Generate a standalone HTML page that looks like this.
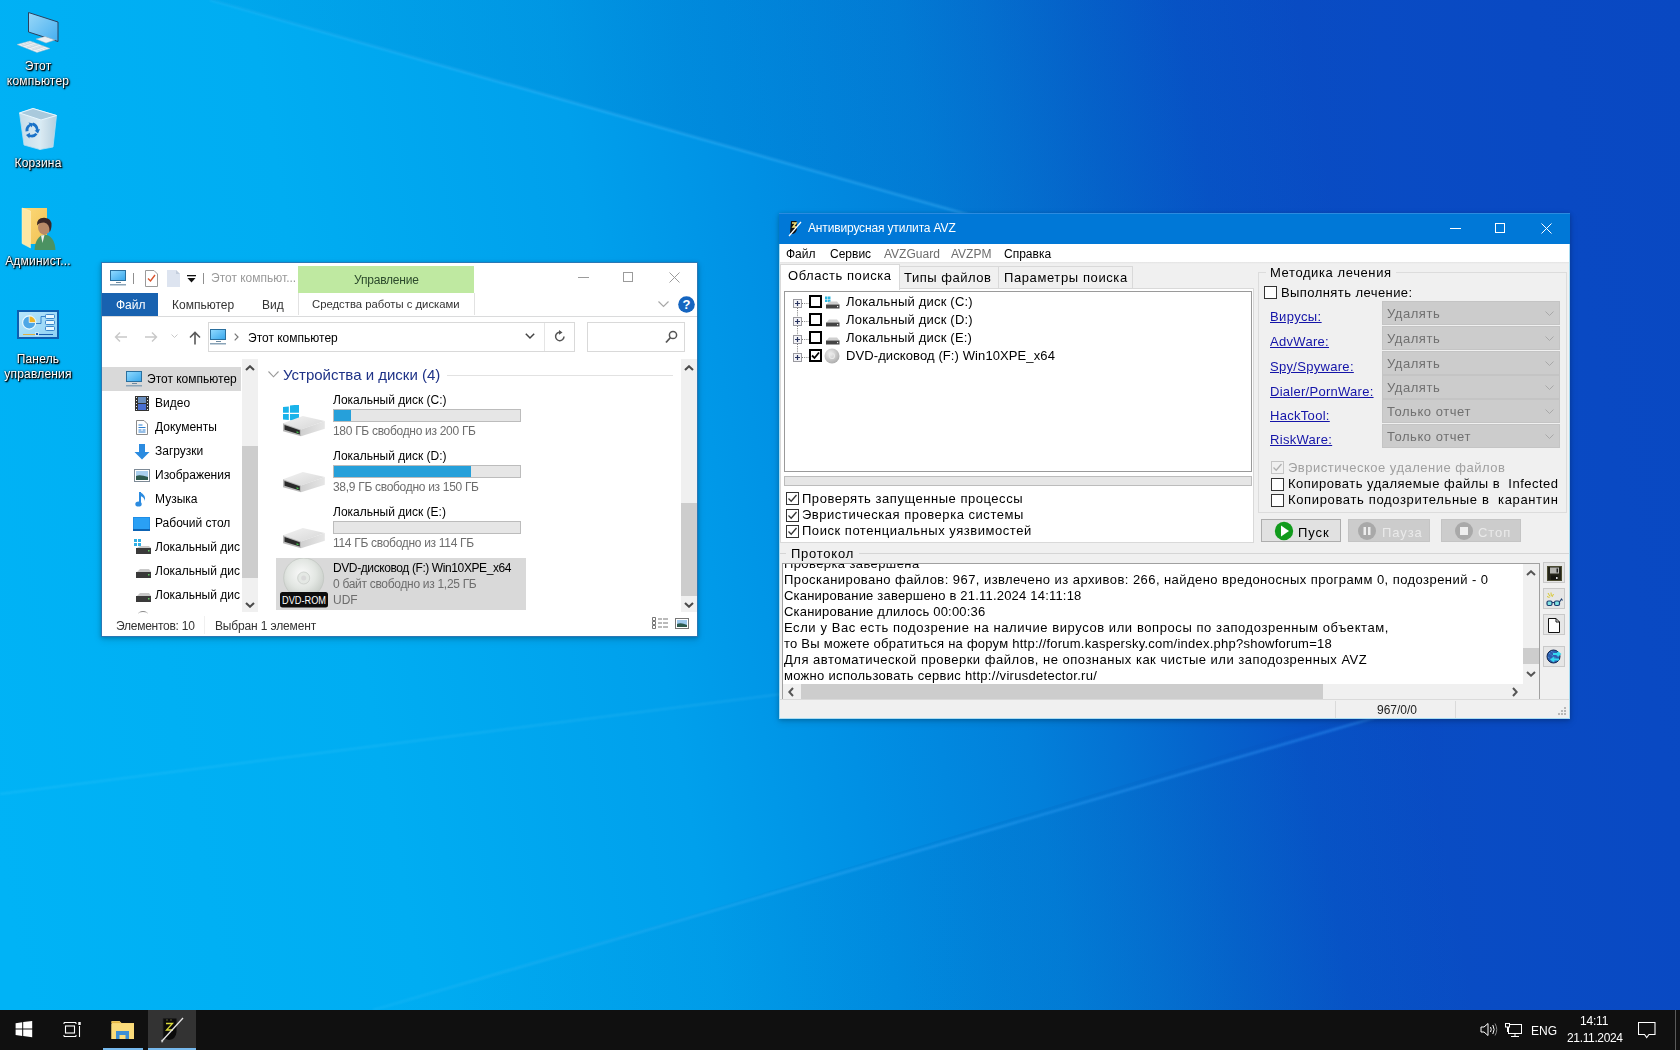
<!DOCTYPE html>
<html><head><meta charset="utf-8">
<style>
*{box-sizing:border-box;margin:0;padding:0}
html,body{width:1680px;height:1050px;overflow:hidden}
body{position:relative;font-family:"Liberation Sans",sans-serif;font-size:12px;color:#000;
background:linear-gradient(80deg,#00b3f6 0px,#00b3f6 31px,#00adf2 425px,#00a0ec 720px,#0090e4 893px,#0280da 1065px,#0473d3 1150px,#0564cc 1238px,#0754c7 1340px,#094cc4 1460px,#0949c3 1686px,#0948c2 1837px);}
.a{position:absolute}
#bgtop{left:0;top:0;width:1680px;height:1010px;background:linear-gradient(180deg,rgba(0,40,140,0.10) 0px,rgba(0,40,140,0) 350px)}
.ray{position:absolute;height:1px;background:rgba(120,220,255,0.45);transform-origin:0 0}
#taskbar{left:0;top:1010px;width:1680px;height:40px;background:#101010}
.dl{position:absolute;will-change:transform;color:#fff;font-size:12px;text-align:center;line-height:15px;letter-spacing:0.2px;text-shadow:1px 1px 1px #000,1px 1px 2px #000,0 0 2px rgba(0,0,0,.85)}

.win{position:absolute;background:#fff;box-shadow:0 1px 4px rgba(0,0,0,.22),0 3px 8px rgba(0,0,0,.12)}
.t{position:absolute;white-space:nowrap;line-height:1;will-change:transform}
#ex{left:101px;top:262px;width:597px;height:375px;border:1px solid #2b78b5}
#ex .t{font-size:12px}
.nav{position:absolute;left:53px;font-size:12px;color:#000}
.sb{position:absolute;background:#f0f0f0}
.th{position:absolute;background:#cdcdcd}
.bar{position:absolute;left:231px;width:188px;height:13px;border:1px solid #bcbcbc;background:#e6e6e6}
.bar i{position:absolute;left:0;top:0;height:11px;background:#26a0da}
.gr{color:#6d6d6d}

#avz{left:779px;top:213px;width:791px;height:506px;background:#f0f0f0;border:1px solid #a9dcf3;border-top:none}
#avz .t{font-size:13px;letter-spacing:0.5px}
#avz .m{font-size:12px;letter-spacing:0}
.cb{position:absolute;width:13px;height:13px;border:1px solid #333;background:#fff}
.cbg{position:absolute;width:13px;height:13px;border:1px solid #333;background:#fff}
.lk{color:#1414a8;text-decoration:underline;text-underline-offset:1px}
.cmb{position:absolute;left:602px;width:178px;height:24px;background:#cccccc;border:1px solid #c4c4c4}
.cmb span{position:absolute;will-change:transform;left:4px;top:5px;font-size:13px;color:#707070;letter-spacing:0.55px;white-space:nowrap;line-height:1}
.cmb svg{position:absolute;right:5px;top:9px}
.btn{position:absolute;height:23px;top:306px;border:1px solid #adadad;background:#e1e1e1}
.tl{position:absolute;left:763px;width:22px;height:21px;border:1px solid #c9c9c9;background:#e6e6e6}
.ln{position:absolute;will-change:transform;left:1px;font-size:13px;letter-spacing:0.4px;white-space:nowrap;line-height:1}
</style></head><body>


<svg width="0" height="0" style="position:absolute">
 <defs>
  <linearGradient id="dtop" x1="0" y1="0" x2="1" y2="1"><stop offset="0" stop-color="#f2f2f2"/><stop offset="1" stop-color="#d6d6d6"/></linearGradient>
  <linearGradient id="dright" x1="0" y1="0" x2="1" y2="0"><stop offset="0" stop-color="#d0d0d0"/><stop offset="1" stop-color="#e6e6e6"/></linearGradient>
  <radialGradient id="disc" cx="0.45" cy="0.4" r="0.6"><stop offset="0" stop-color="#fafafa"/><stop offset="0.6" stop-color="#e2e6e2"/><stop offset="1" stop-color="#c9cec9"/></radialGradient>
  <g id="drive">
   <path d="M1 8.2L20.8 1.1L42.8 6.1L19 14.5Z" fill="url(#dtop)"/>
   <path d="M19 14.5L42.8 6.1V13.7L19 21.2Z" fill="url(#dright)"/>
   <path d="M1 8.2L19 14.5V21.2L1 16.2Z" fill="#b9b9b9"/>
   <path d="M2.5 10L17.8 15.3V19.5L2.5 14.8Z" fill="#2a2a2a"/>
   <path d="M14.5 16.2L16.5 16.9V18.2L14.5 17.5Z" fill="#3fd04a"/>
  </g>
 </defs>
</svg>


<svg class="a" style="left:0;top:0" width="1680" height="1010" viewBox="0 0 1680 1010">
 <defs><filter id="bl" x="-5%" y="-5%" width="110%" height="110%"><feGaussianBlur stdDeviation="1.1"/></filter>
 <linearGradient id="tint1" gradientUnits="userSpaceOnUse" x1="200" y1="0" x2="1400" y2="0"><stop offset="0" stop-color="#001a6e" stop-opacity="0.04"/><stop offset="0.4" stop-color="#001a6e" stop-opacity="0.08"/><stop offset="1" stop-color="#001a6e" stop-opacity="0"/></linearGradient>
 <linearGradient id="tint2" gradientUnits="userSpaceOnUse" x1="373" y1="0" x2="1500" y2="0"><stop offset="0" stop-color="#001a6e" stop-opacity="0"/><stop offset="0.55" stop-color="#001a6e" stop-opacity="0.06"/><stop offset="1" stop-color="#001a6e" stop-opacity="0"/></linearGradient>
 <linearGradient id="ray2" gradientUnits="userSpaceOnUse" x1="373" y1="0" x2="1450" y2="0"><stop offset="0" stop-color="#7ad8ff" stop-opacity="0.1"/><stop offset="0.5" stop-color="#40b0ff" stop-opacity="0.45"/><stop offset="1" stop-color="#3098ff" stop-opacity="0.5"/></linearGradient>
 <linearGradient id="ray1" gradientUnits="userSpaceOnUse" x1="210" y1="0" x2="1150" y2="0"><stop offset="0" stop-color="#60c8ff" stop-opacity="0.2"/><stop offset="0.4" stop-color="#50c0ff" stop-opacity="0.42"/><stop offset="1" stop-color="#50c0ff" stop-opacity="0.42"/></linearGradient>
 </defs>
 <polygon points="210,0 1680,0 1680,416" fill="url(#tint1)"/>
 <polygon points="373,1010 1680,618 1680,1010" fill="url(#tint2)"/>
 <g filter="url(#bl)">
  <polygon points="210,-1.1 1150,264.9 1150,267.1 210,1.1" fill="url(#ray1)"/>
  <polygon points="373,1009 1450,694.5 1450,696.7 373,1011.2" fill="url(#ray2)"/>
  <line x1="0" y1="794" x2="1000" y2="666" stroke="rgba(150,230,255,0.16)" stroke-width="1.5"/>
 </g>
</svg>
<!-- desktop icon graphics -->
<svg class="a" style="left:14px;top:8px" width="48" height="48" viewBox="14 8 48 48">
 <defs><linearGradient id="mscr" x1="0" y1="0" x2="1" y2="1"><stop offset="0" stop-color="#9ad8f8"/><stop offset="1" stop-color="#45aef0"/></linearGradient></defs>
 <path d="M28.5 12.5L58 22V41.5L28.5 32Z" fill="url(#mscr)" stroke="#2b3f5c" stroke-width="1"/>
 <path d="M36 39L45 36.5L55 40L46 43Z" fill="#e9eef2" stroke="#9fb3c3" stroke-width="0.5"/>
 <path d="M17 44.5L30 41L50 48.5L37 52.5Z" fill="#eef2f5" stroke="#a9bccb" stroke-width="0.5"/>
 <path d="M21 44L40 51M24 43L43 50M27 42L46 49M22 46L34 42M27 48L39 44M32 50L44 46" stroke="#b8c8d4" stroke-width="0.5"/>
</svg>
<svg class="a" style="left:14px;top:104px" width="48" height="50" viewBox="14 104 48 50">
 <defs><linearGradient id="bin" x1="0" y1="0" x2="1" y2="0"><stop offset="0" stop-color="#c4dce9"/><stop offset="0.55" stop-color="#dcebf3"/><stop offset="1" stop-color="#b4cfdf"/></linearGradient></defs>
 <path d="M19.5 113L33 108.5L56.5 115.5L53 147L40 149.5L24 145Z" fill="url(#bin)" stroke="#b8dff2" stroke-width="0.8"/>
 <path d="M19.5 113L33 108.5L56.5 115.5L41 120Z" fill="#a9c9dc" stroke="#e8f7ff" stroke-width="1"/>
 <path d="M41 120L40 149.5" stroke="#d7ecf6" stroke-width="1"/>
 <g fill="#1a72c8">
  <path d="M25.5 131.5Q25 126 29.5 124L28.5 122.5L33.5 123.5L31.5 127.5L30.8 126Q28 127.5 28.5 131Z"/>
  <path d="M33 122.5Q38 124 38.5 129.5L40 129L38 133.5L34.5 130.5L36 130.2Q35.5 126.5 32.5 125.5Z"/>
  <path d="M37.5 134.5Q34.5 138.5 29.5 137L29.5 138.5L26 135L30 132.8L29.8 134.5Q33 135.5 35.5 133Z"/>
 </g>
</svg>
<svg class="a" style="left:18px;top:204px" width="44" height="48" viewBox="18 204 44 48">
 <defs><linearGradient id="fold" x1="0" y1="0" x2="1" y2="1"><stop offset="0" stop-color="#fcd978"/><stop offset="1" stop-color="#f2c255"/></linearGradient></defs>
 <path d="M22 208H47V244H30Z" fill="url(#fold)"/>
 <path d="M22 208L30.5 211V248L22 243.5Z" fill="#fde7a4" stroke="#fff3c8" stroke-width="0.5"/>
 <path d="M34.5 250Q35.5 236 44.5 234.5Q54.5 235.5 55.5 250Z" fill="#4b9262"/>
 <path d="M41 235.5L42.5 243L44.5 235Z" fill="#eef2ee"/>
 <ellipse cx="44.3" cy="227.5" rx="6.3" ry="7.2" fill="#b98a68"/>
 <path d="M37 225.5Q36.5 217.5 44.5 217.8Q52 218.2 51.5 226Q51 231 49.5 232Q50 223.5 44 222.5Q39 222.5 37 225.5Z" fill="#3a2626"/>
</svg>
<svg class="a" style="left:16px;top:308px" width="44" height="34" viewBox="16 308 44 34">
 <defs><linearGradient id="cpbg" x1="0" y1="0" x2="1" y2="1"><stop offset="0" stop-color="#b8e6fb"/><stop offset="1" stop-color="#8fd2f5"/></linearGradient></defs>
 <rect x="17" y="310" width="42" height="29" fill="#0e5fb0"/>
 <rect x="19" y="312" width="38" height="25" fill="url(#cpbg)"/>
 <circle cx="29.2" cy="322.5" r="6.6" fill="#4ea7e6" stroke="#eafaff" stroke-width="1.2"/>
 <path d="M29.2 322.5V315.9A6.6 6.6 0 0 1 35.8 322.5Z" fill="#f0b528" stroke="#eafaff" stroke-width="0.8"/>
 <path d="M36 323.5H41V316.5H45" fill="none" stroke="#1a6fc0" stroke-width="0.8"/>
 <rect x="45.5" y="314.5" width="9" height="4" rx="1" fill="#e8f8ff" stroke="#1a6fc0" stroke-width="0.8"/>
 <rect x="45.5" y="320.5" width="9" height="4" rx="1" fill="#e8f8ff" stroke="#1a6fc0" stroke-width="0.8"/>
 <rect x="45.5" y="326.5" width="9" height="4" rx="1" fill="#e8f8ff" stroke="#1a6fc0" stroke-width="0.8"/>
 <rect x="23" y="334" width="14" height="1" fill="#e0b040"/>
 <rect x="37" y="334" width="16" height="1" fill="#1a5fb0"/>
 <rect x="35.6" y="332.6" width="2.8" height="2.8" fill="#1a5fb0" stroke="#eafaff" stroke-width="0.8"/>
</svg>
<!-- desktop icons -->
<div class="dl" style="left:0;top:59px;width:76px">Этот<br>компьютер</div>
<div class="dl" style="left:0;top:156px;width:76px">Корзина</div>
<div class="dl" style="left:0;top:254px;width:76px">Админист...</div>
<div class="dl" style="left:0;top:352px;width:76px">Панель<br>управления</div>


<!-- Explorer window -->
<div id="ex" class="win">
 <!-- title row: coords relative to 102,263 -->
 <svg class="a" style="left:8px;top:7px" width="17" height="16" viewBox="0 0 17 16">
  <rect x="0.5" y="0.5" width="15" height="10" fill="#5ec4f7" stroke="#2a6f9e"/>
  <rect x="1" y="1" width="14" height="9" fill="url(#scr)"/>
  <rect x="6" y="12" width="5" height="1" fill="#6d8aa0"/><rect x="0" y="14" width="16" height="1.5" fill="#8aa4b8"/>
  <defs><linearGradient id="scr" x1="0" y1="0" x2="1" y2="1"><stop offset="0" stop-color="#8fd9ff"/><stop offset="1" stop-color="#3aa8ec"/></linearGradient></defs>
 </svg>
 <div class="a" style="left:31px;top:10px;width:1px;height:11px;background:#8f8f8f"></div>
 <svg class="a" style="left:43px;top:7px" width="13" height="17" viewBox="0 0 13 17">
  <path d="M0.5 0.5H9L12.5 4V16.5H0.5Z" fill="#fff" stroke="#9a9a9a"/>
  <path d="M3 8.5L5.5 11L10 5" fill="none" stroke="#d9532c" stroke-width="1.4"/>
 </svg>
 <svg class="a" style="left:65px;top:7px" width="13" height="17" viewBox="0 0 13 17">
  <path d="M0 0H9L13 4V17H0Z" fill="#dde4f0"/><path d="M9 0V4H13" fill="#c4cedd"/>
 </svg>
 <svg class="a" style="left:85px;top:12px" width="9" height="8" viewBox="0 0 9 8"><rect x="0" y="0" width="9" height="1.3" fill="#111"/><path d="M0.5 3H8.5L4.5 7.5Z" fill="#111"/></svg>
 <div class="a" style="left:101px;top:10px;width:1px;height:11px;background:#8f8f8f"></div>
 <div class="t" style="left:109px;top:9px;color:#9a9a9a;font-size:12px">Этот компьют...</div>
 <div class="a" style="left:196px;top:3px;width:176px;height:27px;background:#bfe9a1"></div>
 <div class="t" style="left:252px;top:11px;color:#2c4a2c;letter-spacing:-0.2px">Управление</div>
 <!-- window buttons -->
 <div class="a" style="left:476px;top:14px;width:11px;height:1px;background:#9b9b9b"></div>
 <div class="a" style="left:521px;top:9px;width:10px;height:10px;border:1px solid #9b9b9b"></div>
 <svg class="a" style="left:567px;top:9px" width="11" height="11" viewBox="0 0 11 11"><path d="M0.5 0.5L10.5 10.5M10.5 0.5L0.5 10.5" stroke="#9b9b9b" stroke-width="1"/></svg>
 <!-- ribbon tabs y 293..316 -> rel 30..53 -->
 <div class="a" style="left:0;top:30px;width:56px;height:23px;background:#1862b0"></div>
 <div class="t" style="left:14px;top:36px;color:#fff">Файл</div>
 <div class="t" style="left:70px;top:36px;color:#333">Компьютер</div>
 <div class="t" style="left:160px;top:36px;color:#333">Вид</div>
 <div class="a" style="left:196px;top:30px;width:1px;height:22px;background:#e2e2e2"></div>
 <div class="t" style="left:210px;top:36px;color:#333;font-size:11.3px!important">Средства работы с дисками</div>
 <div class="a" style="left:372px;top:30px;width:1px;height:22px;background:#e2e2e2"></div>
 <svg class="a" style="left:556px;top:38px" width="11" height="7" viewBox="0 0 11 7"><path d="M0.5 0.5L5.5 5.5L10.5 0.5" fill="none" stroke="#a8a8a8" stroke-width="1.2"/></svg>
 <svg class="a" style="left:576px;top:33px" width="17" height="17" viewBox="0 0 17 17"><circle cx="8.5" cy="8.5" r="8.3" fill="#1565c0"/><text x="8.5" y="13.2" font-family="Liberation Sans" font-weight="bold" font-size="13" fill="#fff" text-anchor="middle">?</text></svg>
 <div class="a" style="left:0;top:53px;width:595px;height:1px;background:#dadbdc"></div>
 <!-- address row -->
 <svg class="a" style="left:12px;top:68px" width="14" height="12" viewBox="0 0 14 12"><path d="M13 6H1.5M6 1.5L1.5 6L6 10.5" fill="none" stroke="#c8c8c8" stroke-width="1.4"/></svg>
 <svg class="a" style="left:42px;top:68px" width="14" height="12" viewBox="0 0 14 12"><path d="M1 6H12.5M8 1.5L12.5 6L8 10.5" fill="none" stroke="#c8c8c8" stroke-width="1.4"/></svg>
 <svg class="a" style="left:69px;top:71px" width="7" height="5" viewBox="0 0 7 5"><path d="M0.5 0.5L3.5 3.5L6.5 0.5" fill="none" stroke="#c8c8c8" stroke-width="1"/></svg>
 <svg class="a" style="left:87px;top:68px" width="12" height="14" viewBox="0 0 12 14"><path d="M6 13.5V1.5M1 6.5L6 1.5L11 6.5" fill="none" stroke="#595959" stroke-width="1.6"/></svg>
 <div class="a" style="left:106px;top:59px;width:367px;height:30px;border:1px solid #d9d9d9"></div>
 <div class="a" style="left:442px;top:60px;width:1px;height:28px;background:#e5e5e5"></div>
 <svg class="a" style="left:108px;top:66px" width="17" height="16" viewBox="0 0 17 16">
  <rect x="0.5" y="0.5" width="15" height="10" fill="#5ec4f7" stroke="#2a6f9e"/>
  <rect x="1" y="1" width="14" height="9" fill="url(#scr)"/>
  <rect x="6" y="12" width="5" height="1" fill="#6d8aa0"/><rect x="0" y="14" width="16" height="1.5" fill="#8aa4b8"/>
 </svg>
 <svg class="a" style="left:132px;top:70px" width="5" height="8" viewBox="0 0 5 8"><path d="M0.7 0.7L4 4L0.7 7.3" fill="none" stroke="#777" stroke-width="1.2"/></svg>
 <div class="t" style="left:146px;top:69px;color:#000">Этот компьютер</div>
 <svg class="a" style="left:423px;top:70px" width="10" height="7" viewBox="0 0 10 7"><path d="M0.8 0.8L5 5L9.2 0.8" fill="none" stroke="#444" stroke-width="1.5"/></svg>
 <svg class="a" style="left:452px;top:67px" width="12" height="13" viewBox="0 0 12 13"><path d="M10 6.5A4.2 4.2 0 1 1 6.5 2.3" fill="none" stroke="#555" stroke-width="1.5"/><path d="M5 0L8.5 2.4L5 4.8Z" fill="#555"/></svg>
 <div class="a" style="left:485px;top:59px;width:98px;height:30px;border:1px solid #d9d9d9"></div>
 <svg class="a" style="left:563px;top:67px" width="13" height="14" viewBox="0 0 13 14"><circle cx="8" cy="5" r="3.6" fill="none" stroke="#555" stroke-width="1.5"/><path d="M5.5 7.5L1 12.5" stroke="#555" stroke-width="1.8"/></svg>
 <!-- nav pane -->
 <div class="a" style="left:0;top:104px;width:139px;height:24px;background:#d9d9d9"></div>
 <svg class="a" style="left:24px;top:108px" width="17" height="16" viewBox="0 0 17 16">
  <rect x="0.5" y="0.5" width="15" height="10" fill="#5ec4f7" stroke="#2a6f9e"/>
  <rect x="1" y="1" width="14" height="9" fill="url(#scr)"/>
  <rect x="6" y="12" width="5" height="1" fill="#6d8aa0"/><rect x="0" y="14" width="16" height="1.5" fill="#8aa4b8"/>
 </svg>
 <div class="t" style="left:45px;top:110px;color:#000">Этот компьютер</div>
 <!-- nav items -->
 <svg class="a" style="left:33px;top:133px" width="14" height="15" viewBox="0 0 14 15"><rect x="0" y="0" width="14" height="15" fill="#333"/><rect x="3" y="1" width="8" height="6" fill="#6a8fbf"/><rect x="3" y="8" width="8" height="6" fill="#4a6fd0"/><path d="M1 1h1v1H1zM1 4h1v1H1zM1 7h1v1H1zM1 10h1v1H1zM1 13h1v1H1zM12 1h1v1h-1zM12 4h1v1h-1zM12 7h1v1h-1zM12 10h1v1h-1zM12 13h1v1h-1z" fill="#eee"/></svg>
 <div class="t" style="left:53px;top:134px">Видео</div>
 <svg class="a" style="left:34px;top:157px" width="12" height="15" viewBox="0 0 12 15"><path d="M0.5 0.5H8L11.5 4V14.5H0.5Z" fill="#fff" stroke="#8a8a8a"/><path d="M2.5 5h4M2.5 7.5h7M2.5 10h3M6.5 10h3M2.5 12h7" stroke="#2c7fd0" stroke-width="1"/></svg>
 <div class="t" style="left:53px;top:158px">Документы</div>
 <svg class="a" style="left:32px;top:181px" width="16" height="16" viewBox="0 0 16 16"><path d="M5 0H11V8H15.5L8 15.5L0.5 8H5Z" fill="#2b8be0"/></svg>
 <div class="t" style="left:53px;top:182px">Загрузки</div>
 <svg class="a" style="left:32px;top:206px" width="16" height="13" viewBox="0 0 16 13"><rect x="0.5" y="0.5" width="15" height="12" fill="#fff" stroke="#7d8a96"/><rect x="2" y="2" width="12" height="9" fill="#a9cfee"/><path d="M2 7Q6 5 14 8V11H2Z" fill="#2d5a4e"/></svg>
 <div class="t" style="left:53px;top:206px">Изображения</div>
 <svg class="a" style="left:33px;top:228px" width="13" height="17" viewBox="0 0 13 17"><path d="M5 1V12.5" stroke="#2b8be0" stroke-width="2"/><ellipse cx="3.5" cy="13" rx="3.2" ry="2.6" fill="#2b8be0"/><path d="M5 1Q11 4 10 10Q9 6 5.5 5" fill="#2b8be0"/></svg>
 <div class="t" style="left:53px;top:230px">Музыка</div>
 <svg class="a" style="left:31px;top:254px" width="17" height="14" viewBox="0 0 17 14"><rect x="0" y="0" width="17" height="14" fill="#1f8de6"/><rect x="1" y="1" width="15" height="11" fill="#2aa0f5"/><rect x="0" y="12" width="17" height="2" fill="#0d63b3"/></svg>
 <div class="t" style="left:53px;top:254px">Рабочий стол</div>
 <svg class="a" style="left:32px;top:276px" width="18" height="16" viewBox="0 0 18 16"><rect x="0" y="0" width="3" height="3" fill="#2fb0e6"/><rect x="4" y="0" width="3" height="3" fill="#2fb0e6"/><rect x="0" y="4" width="3" height="3" fill="#2fb0e6"/><rect x="4" y="4" width="3" height="3" fill="#2fb0e6"/><path d="M3 9L6 7H15L17 9Z" fill="#c9c9c9"/><rect x="2" y="9" width="15" height="6" fill="#3a3a3a"/><rect x="14" y="11" width="1.5" height="1.5" fill="#6c6"/></svg>
 <div class="t" style="left:53px;top:278px">Локальный дис</div>
 <svg class="a" style="left:32px;top:300px" width="18" height="16" viewBox="0 0 18 16"><path d="M3 9L6 6H15L17 9Z" fill="#c9c9c9"/><rect x="2" y="9" width="15" height="6" fill="#3a3a3a"/><rect x="14" y="11" width="1.5" height="1.5" fill="#6c6"/></svg>
 <div class="t" style="left:53px;top:302px">Локальный дис</div>
 <svg class="a" style="left:32px;top:324px" width="18" height="16" viewBox="0 0 18 16"><path d="M3 9L6 6H15L17 9Z" fill="#c9c9c9"/><rect x="2" y="9" width="15" height="6" fill="#3a3a3a"/><rect x="14" y="11" width="1.5" height="1.5" fill="#6c6"/></svg>
 <div class="t" style="left:53px;top:326px">Локальный дис</div>
 <div class="a" style="left:36px;top:348px;width:10px;height:3px;border-top:1px solid #888;border-radius:50%/100% 100% 0 0"></div>
 <!-- nav scrollbar x 242..257 -> rel 140..155, y 359..612 -> rel 96..349 -->
 <div class="sb" style="left:140px;top:96px;width:16px;height:253px"></div>
 <div class="th" style="left:140px;top:183px;width:16px;height:132px"></div>
 <svg class="a" style="left:143px;top:102px" width="10" height="6" viewBox="0 0 10 6"><path d="M1 5L5 1.3L9 5" fill="none" stroke="#4a4a4a" stroke-width="2.1"/></svg>
 <svg class="a" style="left:143px;top:339px" width="10" height="6" viewBox="0 0 10 6"><path d="M1 1L5 4.7L9 1" fill="none" stroke="#4a4a4a" stroke-width="2.1"/></svg>
 <!-- content -->
 <svg class="a" style="left:166px;top:108px" width="11" height="7" viewBox="0 0 11 7"><path d="M0.5 0.5L5.5 5.8L10.5 0.5" fill="none" stroke="#9a9a9a" stroke-width="1.1"/></svg>
 <div class="t" style="left:181px;top:104px;font-size:15px!important;color:#1e3287">Устройства и диски (4)</div>
 <div class="a" style="left:345px;top:112px;width:226px;height:1px;background:#e2e2e2"></div>
 <!-- drives -->
 <div class="t" style="left:231px;top:131px;color:#000">Локальный диск (C:)</div>
 <div class="bar" style="top:146px"><i style="width:17px"></i></div>
 <div class="t gr" style="left:231px;top:162px;letter-spacing:-0.3px">180 ГБ свободно из 200 ГБ</div>
 <div class="t" style="left:231px;top:187px;color:#000">Локальный диск (D:)</div>
 <div class="bar" style="top:202px"><i style="width:137px"></i></div>
 <div class="t gr" style="left:231px;top:218px;letter-spacing:-0.3px">38,9 ГБ свободно из 150 ГБ</div>
 <div class="t" style="left:231px;top:243px;color:#000">Локальный диск (E:)</div>
 <div class="bar" style="top:258px"><i style="width:0"></i></div>
 <div class="t gr" style="left:231px;top:274px;letter-spacing:-0.3px">114 ГБ свободно из 114 ГБ</div>
 <div class="a" style="left:174px;top:295px;width:250px;height:52px;background:#d9d9d9"></div>
 <div class="t" style="left:231px;top:299px;color:#000;letter-spacing:-0.4px">DVD-дисковод (F:) Win10XPE_x64</div>
 <div class="t gr" style="left:231px;top:315px;letter-spacing:-0.3px">0 байт свободно из 1,25 ГБ</div>
 <div class="t gr" style="left:231px;top:331px">UDF</div>

 <!-- large drive icons (rel to 102,263) -->
 <svg class="a" style="left:180px;top:142px" width="44" height="34" viewBox="0 0 44 34">
  <path d="M1 2L6.8 1.5V7.8H1ZM8 0.6L17 -0.6V7.8H8ZM1 9H6.8V14.9L1 14.4ZM8 9H17V16.6L8 15.3Z" fill="#1ab3ea"/>
  <use href="#drive" x="0" y="10"/>
 </svg>
 <svg class="a" style="left:180px;top:208px" width="44" height="24" viewBox="0 0 44 24"><use href="#drive" x="0" y="0"/></svg>
 <svg class="a" style="left:180px;top:264px" width="44" height="24" viewBox="0 0 44 24"><use href="#drive" x="0" y="0"/></svg>
 <svg class="a" style="left:178px;top:295px" width="50" height="52" viewBox="0 0 50 52">
  <circle cx="23.7" cy="20" r="20" fill="url(#disc)"/>
  <circle cx="23.7" cy="20" r="20" fill="none" stroke="#c2c6c2" stroke-width="0.8"/>
  <circle cx="23.7" cy="20" r="6" fill="#e4e8e4" stroke="#cfd3cf"/>
  <circle cx="23.7" cy="20" r="2.5" fill="#d9d9d9"/>
  <rect x="0" y="34" width="48" height="15.5" rx="2.5" fill="#0d0d0d"/>
  <text x="2" y="46" font-family="Liberation Sans" font-size="11" fill="#fff" textLength="44" lengthAdjust="spacingAndGlyphs">DVD-ROM</text>
 </svg>
 <!-- content scrollbar x 681..696 -> rel 579..594 -->
 <div class="sb" style="left:579px;top:96px;width:16px;height:253px"></div>
 <div class="th" style="left:579px;top:240px;width:16px;height:93px"></div>
 <svg class="a" style="left:582px;top:102px" width="10" height="6" viewBox="0 0 10 6"><path d="M1 5L5 1.3L9 5" fill="none" stroke="#4a4a4a" stroke-width="2.1"/></svg>
 <svg class="a" style="left:582px;top:339px" width="10" height="6" viewBox="0 0 10 6"><path d="M1 1L5 4.7L9 1" fill="none" stroke="#4a4a4a" stroke-width="2.1"/></svg>
 <!-- status -->
 <div class="t" style="left:14px;top:357px;color:#333;letter-spacing:-0.25px">Элементов: 10</div>
 <div class="a" style="left:102px;top:353px;width:1px;height:18px;background:#f0f0f0"></div>
 <div class="t" style="left:113px;top:357px;color:#333;letter-spacing:-0.15px">Выбран 1 элемент</div>
 <svg class="a" style="left:550px;top:354px" width="17" height="13" viewBox="0 0 17 13"><path d="M0.5 0.5h3v3h-3zM0.5 4.5h3v3h-3zM0.5 8.5h3v3h-3z" fill="none" stroke="#777"/><path d="M6 2h4M11 2h5M6 6h4M11 6h5M6 10h4M11 10h5" stroke="#777"/></svg>
 <svg class="a" style="left:573px;top:355px" width="14" height="11" viewBox="0 0 14 11"><rect x="0.5" y="0.5" width="13" height="10" fill="#fff" stroke="#777"/><rect x="2" y="2" width="10" height="7" fill="#9cc8ec"/><path d="M2 6Q6 4 12 7V9H2Z" fill="#2d5a4e"/></svg>
</div>


<!-- AVZ window -->
<div id="avz" class="win">
 <div class="a" style="left:-1px;top:0;width:791px;height:31px;background:#0078d7;border-top:1px solid #2b8be0"></div>
 <svg class="a" style="left:8px;top:7px" width="14" height="17" viewBox="0 0 14 17">
  <path d="M3 1H8.5L9 9Q8 14 3.5 14L2 13Z" fill="#111"/>
  <path d="M4 3H8L5 7H8" fill="none" stroke="#f3e27a" stroke-width="1.5"/>
  <path d="M1 16L13 2" stroke="#fff" stroke-width="1.2"/>
 </svg>
 <div class="t m" style="left:28px;top:9px;color:#fff;letter-spacing:-0.15px">Антивирусная утилита AVZ</div>
 <div class="a" style="left:670px;top:15px;width:11px;height:1px;background:#fff"></div>
 <div class="a" style="left:715px;top:10px;width:10px;height:10px;border:1px solid #fff"></div>
 <svg class="a" style="left:761px;top:10px" width="11" height="11" viewBox="0 0 11 11"><path d="M0.5 0.5L10.5 10.5M10.5 0.5L0.5 10.5" stroke="#fff" stroke-width="1"/></svg>
 <!-- menu -->
 <div class="a" style="left:0;top:31px;width:789px;height:18px;background:#fff"></div>
 <div class="a" style="left:0;top:49px;width:789px;height:2px;background:linear-gradient(#e3e3e3,#f0f0f0)"></div>
 <div class="t m" style="left:6px;top:35px">Файл</div>
 <div class="t m" style="left:50px;top:35px">Сервис</div>
 <div class="t m" style="left:104px;top:35px;color:#6d6d6d">AVZGuard</div>
 <div class="t m" style="left:171px;top:35px;color:#6d6d6d">AVZPM</div>
 <div class="t m" style="left:224px;top:35px">Справка</div>
 <!-- tabs -->
 <div class="a" style="left:119px;top:53px;width:100px;height:23px;background:#f0f0f0;border:1px solid #d9d9d9;border-bottom:none"></div>
 <div class="a" style="left:218px;top:53px;width:135px;height:23px;background:#f0f0f0;border:1px solid #d9d9d9;border-bottom:none"></div>
 <div class="a" style="left:0px;top:75px;width:474px;height:255px;background:#fff;border:1px solid #d9d9d9"></div>
 <div class="a" style="left:0px;top:51px;width:120px;height:26px;background:#fff;border:1px solid #d9d9d9;border-bottom:none"></div>
 <div class="t" style="left:8px;top:56px;letter-spacing:0.55px">Область поиска</div>
 <div class="t" style="left:124px;top:58px;letter-spacing:0.53px">Типы файлов</div>
 <div class="t" style="left:224px;top:58px;letter-spacing:0.6px">Параметры поиска</div>
 <!-- tree -->
 <div class="a" style="left:4px;top:78px;width:468px;height:181px;background:#fff;border:1px solid #9a9a9a"></div>
 <svg class="a" style="left:13px;top:86px" width="30" height="70" viewBox="0 0 30 70">
  <g fill="#f4f4f8" stroke="#9a9aa0"><rect x="0.5" y="0.5" width="8" height="8"/><rect x="0.5" y="18.5" width="8" height="8"/><rect x="0.5" y="36.5" width="8" height="8"/><rect x="0.5" y="54.5" width="8" height="8"/></g>
  <g stroke="#2a3560" stroke-width="1.2"><path d="M2 4.5H7M4.5 2V7"/><path d="M2 22.5H7M4.5 20V25"/><path d="M2 40.5H7M4.5 38V43"/><path d="M2 58.5H7M4.5 56V61"/></g>
  <g stroke="#777" stroke-dasharray="1 1.2"><path d="M9 4.5H16M9 22.5H16M9 40.5H16M9 58.5H16M4.5 9V18M4.5 27V36M4.5 45V54"/></g>
 </svg>
 <div class="cb" style="left:29px;top:82px;border-width:2px;border-color:#000"></div>
 <div class="cb" style="left:29px;top:100px;border-width:2px;border-color:#000"></div>
 <div class="cb" style="left:29px;top:118px;border-width:2px;border-color:#000"></div>
 <div class="cb" style="left:29px;top:136px;border-width:2px;border-color:#000"><svg class="a" style="left:0;top:0" width="9" height="9" viewBox="0 0 9 9"><path d="M1 4.5L3.5 7L8 1.5" fill="none" stroke="#000" stroke-width="1.8"/></svg></div>
 <svg class="a" style="left:44px;top:83px" width="16" height="13" viewBox="0 0 16 13"><rect x="1" y="0.5" width="2.5" height="2.5" fill="#2fb8e0"/><rect x="4" y="0.5" width="2.5" height="2.5" fill="#2fb8e0"/><rect x="1" y="3.5" width="2.5" height="2.5" fill="#2fb8e0"/><rect x="4" y="3.5" width="2.5" height="2.5" fill="#2fb8e0"/><path d="M2.5 8.5L5 5.5H13L15.5 8.5Z" fill="#cfcfcf"/><rect x="2" y="8.5" width="13.5" height="4" fill="#444"/><rect x="13" y="10" width="1.2" height="1.2" fill="#eee"/></svg>
 <svg class="a" style="left:44px;top:101px" width="16" height="13" viewBox="0 0 16 13"><path d="M2.5 8.5L5 5.5H13L15.5 8.5Z" fill="#cfcfcf"/><rect x="2" y="8.5" width="13.5" height="4" fill="#444"/><rect x="13" y="10" width="1.2" height="1.2" fill="#eee"/></svg>
 <svg class="a" style="left:44px;top:119px" width="16" height="13" viewBox="0 0 16 13"><path d="M2.5 8.5L5 5.5H13L15.5 8.5Z" fill="#cfcfcf"/><rect x="2" y="8.5" width="13.5" height="4" fill="#444"/><rect x="13" y="10" width="1.2" height="1.2" fill="#eee"/></svg>
 <svg class="a" style="left:44px;top:135px" width="16" height="16" viewBox="0 0 16 16"><defs><radialGradient id="cd2" cx="0.4" cy="0.35" r="0.7"><stop offset="0" stop-color="#f0f0f0"/><stop offset="1" stop-color="#a9a9a9"/></radialGradient></defs><circle cx="8" cy="8" r="7.5" fill="url(#cd2)"/><circle cx="8" cy="8" r="2.5" fill="none" stroke="#e8e8e8" stroke-width="1.2"/></svg>
 <div class="t" style="left:66px;top:82px;letter-spacing:0.2px">Локальный диск (C:)</div>
 <div class="t" style="left:66px;top:100px;letter-spacing:0.2px">Локальный диск (D:)</div>
 <div class="t" style="left:66px;top:118px;letter-spacing:0.2px">Локальный диск (E:)</div>
 <div class="t" style="left:66px;top:136px;letter-spacing:0.1px">DVD-дисковод (F:) Win10XPE_x64</div>
 <!-- progress -->
 <div class="a" style="left:4px;top:263px;width:468px;height:10px;background:#e6e6e6;border:1px solid #bcbcbc"></div>
 <!-- checks -->
 <div class="cb" style="left:6px;top:279px;border-color:#333"><svg class="a" style="left:1px;top:1px" width="9" height="9" viewBox="0 0 9 9"><path d="M0.5 4.5L3.2 7.2L8.5 1" fill="none" stroke="#333" stroke-width="1.3"/></svg></div>
 <div class="cb" style="left:6px;top:296px;border-color:#333"><svg class="a" style="left:1px;top:1px" width="9" height="9" viewBox="0 0 9 9"><path d="M0.5 4.5L3.2 7.2L8.5 1" fill="none" stroke="#333" stroke-width="1.3"/></svg></div>
 <div class="cb" style="left:6px;top:312px;border-color:#333"><svg class="a" style="left:1px;top:1px" width="9" height="9" viewBox="0 0 9 9"><path d="M0.5 4.5L3.2 7.2L8.5 1" fill="none" stroke="#333" stroke-width="1.3"/></svg></div>
 <div class="t" style="left:22px;top:279px;letter-spacing:0.53px">Проверять запущенные процессы</div>
 <div class="t" style="left:22px;top:295px;letter-spacing:0.53px">Эвристическая проверка системы</div>
 <div class="t" style="left:22px;top:311px;letter-spacing:0.53px">Поиск потенциальных уязвимостей</div>
 <!-- groupbox -->
 <div class="a" style="left:478px;top:59px;width:309px;height:241px;border:1px solid #dcdcdc"></div>
 <div class="a" style="left:486px;top:52px;width:130px;height:14px;background:#f0f0f0"></div>
 <div class="t" style="left:490px;top:53px;letter-spacing:0.6px">Методика лечения</div>
 <div class="cb" style="left:484px;top:73px"></div>
 <div class="t" style="left:501px;top:73px;letter-spacing:0.43px">Выполнять лечение:</div>
 <div class="t lk" style="left:490px;top:97px;letter-spacing:0.4px">Вирусы:</div>
 <div class="t lk" style="left:490px;top:122px;letter-spacing:0.3px">AdvWare:</div>
 <div class="t lk" style="left:490px;top:147px;letter-spacing:0.3px">Spy/Spyware:</div>
 <div class="t lk" style="left:490px;top:172px;letter-spacing:0.27px">Dialer/PornWare:</div>
 <div class="t lk" style="left:490px;top:196px;letter-spacing:0.3px">HackTool:</div>
 <div class="t lk" style="left:490px;top:220px;letter-spacing:0.3px">RiskWare:</div>
 <div class="cmb" style="top:88px"><span>Удалять</span><svg width="9" height="6" viewBox="0 0 9 6"><path d="M0.5 0.5L4.5 4.5L8.5 0.5" fill="none" stroke="#a8a8a8"/></svg></div>
 <div class="cmb" style="top:113px"><span>Удалять</span><svg width="9" height="6" viewBox="0 0 9 6"><path d="M0.5 0.5L4.5 4.5L8.5 0.5" fill="none" stroke="#a8a8a8"/></svg></div>
 <div class="cmb" style="top:138px"><span>Удалять</span><svg width="9" height="6" viewBox="0 0 9 6"><path d="M0.5 0.5L4.5 4.5L8.5 0.5" fill="none" stroke="#a8a8a8"/></svg></div>
 <div class="cmb" style="top:162px"><span>Удалять</span><svg width="9" height="6" viewBox="0 0 9 6"><path d="M0.5 0.5L4.5 4.5L8.5 0.5" fill="none" stroke="#a8a8a8"/></svg></div>
 <div class="cmb" style="top:186px"><span>Только отчет</span><svg width="9" height="6" viewBox="0 0 9 6"><path d="M0.5 0.5L4.5 4.5L8.5 0.5" fill="none" stroke="#a8a8a8"/></svg></div>
 <div class="cmb" style="top:211px"><span>Только отчет</span><svg width="9" height="6" viewBox="0 0 9 6"><path d="M0.5 0.5L4.5 4.5L8.5 0.5" fill="none" stroke="#a8a8a8"/></svg></div>
 <div class="cb" style="left:491px;top:248px;border-color:#c4c4c4;background:#f0f0f0"><svg class="a" style="left:1px;top:1px" width="9" height="9" viewBox="0 0 9 9"><path d="M0.5 4.5L3.2 7.2L8.5 1" fill="none" stroke="#b0b0b0" stroke-width="1.3"/></svg></div>
 <div class="t" style="left:508px;top:248px;color:#a0a0a0;letter-spacing:0.5px">Эвристическое удаление файлов</div>
 <div class="cb" style="left:491px;top:265px"></div>
 <div class="t" style="left:508px;top:264px;letter-spacing:0.5px">Копировать удаляемые файлы в&nbsp; Infected</div>
 <div class="cb" style="left:491px;top:281px"></div>
 <div class="t" style="left:508px;top:280px;letter-spacing:0.65px">Копировать подозрительные в&nbsp; карантин</div>
 <!-- buttons -->
 <div class="btn" style="left:481px;width:80px"></div>
 <svg class="a" style="left:494px;top:308px" width="20" height="20" viewBox="0 0 20 20"><circle cx="10" cy="10" r="9.2" fill="#129b1d"/><path d="M7 4.5L15 10L7 15.5Z" fill="#fff"/></svg>
 <div class="t" style="left:518px;top:313px;letter-spacing:0.9px">Пуск</div>
 <div class="btn" style="left:568px;width:82px;background:#cccccc;border-color:#c4c4c4"></div>
 <svg class="a" style="left:577px;top:308px" width="20" height="20" viewBox="0 0 20 20"><circle cx="10" cy="10" r="9" fill="#a9a9a9"/><rect x="6.5" y="6" width="2.5" height="8" fill="#eee"/><rect x="11" y="6" width="2.5" height="8" fill="#eee"/></svg>
 <div class="t" style="left:602px;top:313px;color:#eaeaea;letter-spacing:0.9px">Пауза</div>
 <div class="btn" style="left:661px;width:80px;background:#cccccc;border-color:#c4c4c4"></div>
 <svg class="a" style="left:674px;top:308px" width="20" height="20" viewBox="0 0 20 20"><circle cx="10" cy="10" r="9" fill="#a9a9a9"/><rect x="6" y="6" width="8" height="8" fill="#eee"/></svg>
 <div class="t" style="left:698px;top:313px;color:#eaeaea;letter-spacing:0.9px">Стоп</div>
 <!-- protocol -->
 <div class="a" style="left:0;top:340px;width:789px;height:1px;background:#d5d5d5"></div>
 <div class="a" style="left:6px;top:333px;width:73px;height:14px;background:#f0f0f0"></div>
 <div class="t" style="left:11px;top:334px;letter-spacing:0.76px">Протокол</div>
 <div class="a" style="left:2px;top:350px;width:758px;height:137px;background:#fff;border:1px solid #a0a0a0;overflow:hidden">
  <div class="ln" style="top:-7px">Проверка завершена</div>
  <div class="ln" style="top:9px;letter-spacing:0.44px">Просканировано файлов: 967, извлечено из архивов: 266, найдено вредоносных программ 0, подозрений - 0</div>
  <div class="ln" style="top:25px;letter-spacing:0.2px">Сканирование завершено в 21.11.2024 14:11:18</div>
  <div class="ln" style="top:41px;letter-spacing:0.2px">Сканирование длилось 00:00:36</div>
  <div class="ln" style="top:57px;letter-spacing:0.58px">Если у Вас есть подозрение на наличие вирусов или вопросы по заподозренным объектам,</div>
  <div class="ln" style="top:73px;letter-spacing:0.24px">то Вы можете обратиться на форум http://forum.kaspersky.com/index.php?showforum=18</div>
  <div class="ln" style="top:89px;letter-spacing:0.5px">Для автоматической проверки файлов, не опознаных как чистые или заподозренных AVZ</div>
  <div class="ln" style="top:105px;letter-spacing:0.3px">можно использовать сервис http://virusdetector.ru/</div>
  <!-- vscroll -->
  <div class="sb" style="left:740px;top:0;width:16px;height:120px"></div>
  <div class="th" style="left:740px;top:84px;width:16px;height:16px"></div>
  <svg class="a" style="left:743px;top:6px" width="10" height="6" viewBox="0 0 10 6"><path d="M1 5L5 1.3L9 5" fill="none" stroke="#555" stroke-width="2"/></svg>
  <svg class="a" style="left:743px;top:107px" width="10" height="6" viewBox="0 0 10 6"><path d="M1 1L5 4.7L9 1" fill="none" stroke="#555" stroke-width="2"/></svg>
  <!-- hscroll -->
  <div class="sb" style="left:0;top:120px;width:756px;height:15px"></div>
  <div class="th" style="left:18px;top:120px;width:522px;height:15px"></div>
  <svg class="a" style="left:5px;top:123px" width="6" height="10" viewBox="0 0 6 10"><path d="M5 1L1.3 5L5 9" fill="none" stroke="#555" stroke-width="2"/></svg>
  <svg class="a" style="left:729px;top:123px" width="6" height="10" viewBox="0 0 6 10"><path d="M1 1L4.7 5L1 9" fill="none" stroke="#555" stroke-width="2"/></svg>
 </div>
 <div class="a" style="left:759px;top:486px;width:1px;height:0px;background:#a0a0a0"></div>
 <!-- tool buttons -->
 <div class="tl" style="top:349px"><svg class="a" style="left:3px;top:3px" width="15" height="15" viewBox="0 0 15 15"><rect x="0.5" y="0.5" width="14" height="14" fill="#25251a"/><rect x="3" y="1.5" width="9" height="6" fill="#b4b4b0"/><rect x="9.5" y="2.5" width="1.5" height="4" fill="#222"/><rect x="4" y="9.5" width="7" height="5" fill="#151510"/><rect x="9" y="11" width="1.6" height="2" fill="#ddd"/><rect x="0.5" y="0.5" width="14" height="14" fill="none" stroke="#4a4a30"/></svg></div>
 <div class="tl" style="top:375px"><svg class="a" style="left:2px;top:3px" width="17" height="15" viewBox="0 0 17 15"><rect x="1" y="9" width="5" height="4.5" rx="1.5" fill="#7fe3e3" stroke="#1d3d6e" stroke-width="1.2"/><rect x="8.5" y="9" width="5" height="4.5" rx="1.5" fill="#7fe3e3" stroke="#1d3d6e" stroke-width="1.2"/><path d="M6 10.5H8.5M13.5 10L15.5 7L16.5 8.5" fill="none" stroke="#1d3d6e" stroke-width="1.1"/><path d="M2 1L4 4.5M5 0.5L5.3 4M1 4.5L3.5 5.5M7.5 2L6 5" stroke="#d8c830" stroke-width="1"/></svg></div>
 <div class="tl" style="top:401px"><svg class="a" style="left:4px;top:3px" width="12" height="15" viewBox="0 0 12 15"><path d="M0.5 0.5H8L11.5 4V14.5H0.5Z" fill="#fff" stroke="#111"/><path d="M8 0.5V4H11.5" fill="none" stroke="#111"/></svg></div>
 <div class="tl" style="top:433px"><svg class="a" style="left:2px;top:2px" width="17" height="17" viewBox="0 0 17 17"><circle cx="7.5" cy="7.5" r="6.5" fill="#2a5fb0" stroke="#0d2550"/><path d="M3 4L12 11M2 8L9 13M5 2L13 8" stroke="#6fa8e8" stroke-width="0.8" stroke-dasharray="1 1"/><path d="M7 5H13.5M11.5 3L14 5L11.5 7" fill="none" stroke="#33d6ee" stroke-width="1.8"/><path d="M13 10.5H6M8 8.5L5.5 10.5L8 12.5" fill="none" stroke="#33d6ee" stroke-width="1.8"/></svg></div>
 <!-- status bar -->
 <div class="a" style="left:0;top:486px;width:789px;height:1px;background:#dadada"></div>
 <div class="a" style="left:555px;top:488px;width:1px;height:17px;background:#dadada"></div>
 <div class="a" style="left:675px;top:488px;width:1px;height:17px;background:#dadada"></div>
 <div class="t m" style="left:597px;top:491px;color:#222">967/0/0</div>
 <svg class="a" style="left:778px;top:494px" width="9" height="9" viewBox="0 0 9 9"><path d="M6 0h2v2H6zM3 3h2v2H3zM6 3h2v2H6zM0 6h2v2H0zM3 6h2v2H3zM6 6h2v2H6z" fill="#b8b8b8"/></svg>
</div>


<div id="taskbar" class="a">
 <svg class="a" style="left:15px;top:11px" width="18" height="17" viewBox="0 0 18 17">
  <path d="M0.6 2.2L7.2 1.3V7.6H0.6ZM8.2 1.1L17.2 0V7.6H8.2ZM0.6 8.6H7.2V15L0.6 14.1ZM8.2 8.6H17.2V16.2L8.2 15.1Z" fill="#fff"/>
 </svg>
 <svg class="a" style="left:63px;top:11px" width="18" height="17" viewBox="0 0 18 17" fill="none" stroke="#fff" stroke-width="1.1">
  <path d="M1 1.5H13M1 15.5H13"/><path d="M1 1.5V3M13 1.5V3M1 15.5V14M13 15.5V14"/>
  <rect x="2.5" y="5" width="9" height="7"/>
  <path d="M16.5 5V16"/><rect x="15.3" y="1" width="2.4" height="3" fill="#fff" stroke="none"/>
 </svg>
 <svg class="a" style="left:111px;top:10px" width="24" height="20" viewBox="0 0 24 20">
  <path d="M0.5 1H8.5L10.5 3H23V19H0.5Z" fill="#f8d775"/>
  <path d="M0.5 4H23V19H0.5Z" fill="#fbdc7b"/>
  <path d="M0.5 3H10L8 1.5H0.5Z" fill="#e6b743"/>
  <path d="M5 11H18V19H14.5V15H8.5V19H5Z" fill="#3d8fd6"/>
 </svg>
 <div class="a" style="left:103px;top:38px;width:40px;height:2px;background:#76b9ed"></div>
 <div class="a" style="left:148px;top:0;width:48px;height:40px;background:#333"></div>
 <svg class="a" style="left:160px;top:7px" width="24" height="26" viewBox="0 0 24 26">
  <path d="M3 1.5H16.5V15Q16 22 9 23L3 21Z" fill="#0b0b0b"/>
  <path d="M3 1.5V21" stroke="#2a2a2a" stroke-width="0.8"/>
  <path d="M6 6.5H12.5L6.5 13H13" fill="none" stroke="#d9d83a" stroke-width="1.3"/>
  <path d="M6 3H8M10 3H12" stroke="#6a6a40" stroke-width="0.8"/>
  <path d="M2 24L23 1" stroke="#e6e6e6" stroke-width="1.3"/>
  <path d="M1 22.5L3.5 25L1.5 25.5Z" fill="#cfcfcf"/>
 </svg>
 <div class="a" style="left:148px;top:38px;width:48px;height:2px;background:#76b9ed"></div>
 <!-- tray -->
 <svg class="a" style="left:1480px;top:12px" width="18" height="15" viewBox="0 0 18 15" fill="none" stroke="#fff" stroke-width="1">
  <path d="M1 5H4L8 1.5V13.5L4 10H1Z"/><path d="M10.5 5Q12 7.5 10.5 10M12.8 3Q15.5 7.5 12.8 12"/><path d="M15 1.5Q18.5 7.5 15 13.5" stroke="#888"/>
 </svg>
 <svg class="a" style="left:1505px;top:13px" width="17" height="15" viewBox="0 0 17 15" fill="none" stroke="#fff" stroke-width="1">
  <rect x="3.5" y="1.5" width="13" height="9"/><path d="M10 10.5V13.5M6 13.5H14"/><rect x="0.5" y="0.5" width="4" height="3.5" fill="#101010"/><path d="M2.5 4V9"/>
 </svg>
 <div class="t" style="left:1531px;top:15px;color:#fff;font-size:12px;letter-spacing:0.1px">ENG</div>
 <div class="t" style="left:1580px;top:5px;color:#fff;font-size:12px;letter-spacing:-0.2px">14:11</div>
 <div class="t" style="left:1567px;top:22px;color:#fff;font-size:12px;letter-spacing:-0.35px">21.11.2024</div>
 <svg class="a" style="left:1638px;top:12px" width="18" height="17" viewBox="0 0 18 17" fill="none" stroke="#fff" stroke-width="1.1">
  <path d="M0.5 0.5H17V12.5H11L8.7 15.5L6.5 12.5H0.5Z"/>
 </svg>
 <div class="a" style="left:1675px;top:0;width:1px;height:40px;background:#5a5a5a"></div>
</div>

</body></html>
